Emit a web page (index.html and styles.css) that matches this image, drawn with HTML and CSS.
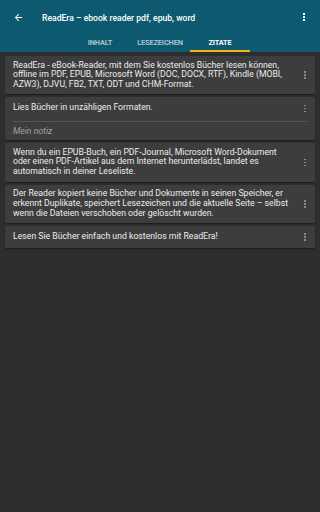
FILE: index.html
```html
<!DOCTYPE html>
<html lang="de">
<head>
<meta charset="utf-8">
<link rel="stylesheet" href="styles.css">
</head>
<body>
<header class="appbar">
  <div class="toolbar">
    <svg class="back" viewBox="0 0 24 24" width="11" height="11"><path d="M20 11H7.83l5.59-5.59L12 4l-8 8 8 8 1.41-1.41L7.83 13H20v-2z" fill="#fff"/></svg>
    <div class="title">ReadEra – ebook reader pdf, epub, word</div>
    <div class="dots"><i></i><i></i><i></i></div>
  </div>
  <nav class="tabs">
    <div class="tab">INHALT</div>
    <div class="tab">LESEZEICHEN</div>
    <div class="tab active">ZITATE</div>
  </nav>
</header>
<main class="list">
  <div class="card">
    <div class="row">
      <p class="text">ReadEra - eBook-Reader, mit dem Sie kostenlos Bücher lesen können, offline im PDF, EPUB, Microsoft Word (DOC, DOCX, RTF), Kindle (MOBI, AZW3), DJVU, FB2, TXT, ODT und CHM-Format.</p>
      <div class="more"><i></i><i></i><i></i></div>
    </div>
  </div>
  <div class="card">
    <div class="row">
      <p class="text">Lies Bücher in unzähligen Formaten.</p>
      <div class="more"><i></i><i></i><i></i></div>
    </div>
    <div class="divider"></div>
    <p class="note">Mein notiz</p>
  </div>
  <div class="card">
    <div class="row">
      <p class="text">Wenn du ein EPUB-Buch, ein PDF-Journal, Microsoft Word-Dokument oder einen PDF-Artikel aus dem Internet herunterlädst, landet es automatisch in deiner Leseliste.</p>
      <div class="more"><i></i><i></i><i></i></div>
    </div>
  </div>
  <div class="card">
    <div class="row">
      <p class="text">Der Reader kopiert keine Bücher und Dokumente in seinen Speicher, er erkennt Duplikate, speichert Lesezeichen und die aktuelle Seite – selbst wenn die Dateien verschoben oder gelöscht wurden.</p>
      <div class="more"><i></i><i></i><i></i></div>
    </div>
  </div>
  <div class="card">
    <div class="row">
      <p class="text">Lesen Sie Bücher einfach und kostenlos mit ReadEra!</p>
      <div class="more"><i></i><i></i><i></i></div>
    </div>
  </div>
</main>
</body>
</html>
```
FILE: styles.css
```css
* { box-sizing: border-box; }
html, body { margin: 0; padding: 0; }
body {
  width: 320px;
  height: 512px;
  background: #2d2d2d;
  font-family: Roboto, "Liberation Sans", sans-serif;
  color: #ececec;
  overflow: hidden;
}
.appbar {
  background: #0d5a70;
  height: 52px;
  display: flex;
  flex-direction: column;
}
.toolbar {
  height: 35px;
  display: flex;
  align-items: center;
  padding: 0 0 0 13px;
}
.back { flex: none; }
.title {
  margin-left: 18px;
  font-size: 8.6px;
  font-weight: 500;
  color: #fff;
  flex: 1;
}
.dots {
  width: 32px;
  display: flex;
  flex-direction: column;
  align-items: center;
  gap: 1.2px;
  margin-top: -1px;
}
.dots i {
  width: 2px;
  height: 2px;
  background: #fff;
  display: block;
}
.tabs {
  display: flex;
  justify-content: center;
  height: 17px;
}
.tab {
  width: 60px;
  text-align: center;
  font-size: 7.4px;
  font-weight: 700;
  color: #a9c2cb;
  line-height: 15px;
  border-bottom: 2px solid transparent;
  letter-spacing: -0.15px;
}
.tab.active {
  color: #fff;
  border-bottom-color: #f3b51a;
}
.list {
  padding: 4px 5px 0;
  display: flex;
  flex-direction: column;
  gap: 3px;
}
.card {
  background: #3d3d3d;
  border-radius: 1.5px;
  box-shadow: 0 1px 1px rgba(0,0,0,0.35);
}
.row {
  display: flex;
  align-items: center;
  min-height: 22px;
  padding: 4.5px 0 4.5px 8px;
}
.text {
  margin: 0;
  flex: 1;
  font-size: 8.7px;
  line-height: 9.8px;
}
.more {
  width: 20px;
  flex: none;
  display: flex;
  flex-direction: column;
  align-items: center;
  gap: 1.4px;
  margin-left: 4px;
}
.more i {
  display: block;
  width: 1.6px;
  height: 1.6px;
  background: #8a8a8a;
}
.divider {
  height: 1px;
  background: #565656;
  margin: 2px 8px 0 8px;
}
.note {
  margin: 0;
  padding: 5px 8px 3px;
  font-size: 8.7px;
  line-height: 9.8px;
  font-style: italic;
  color: #a3a3a3;
}
```
